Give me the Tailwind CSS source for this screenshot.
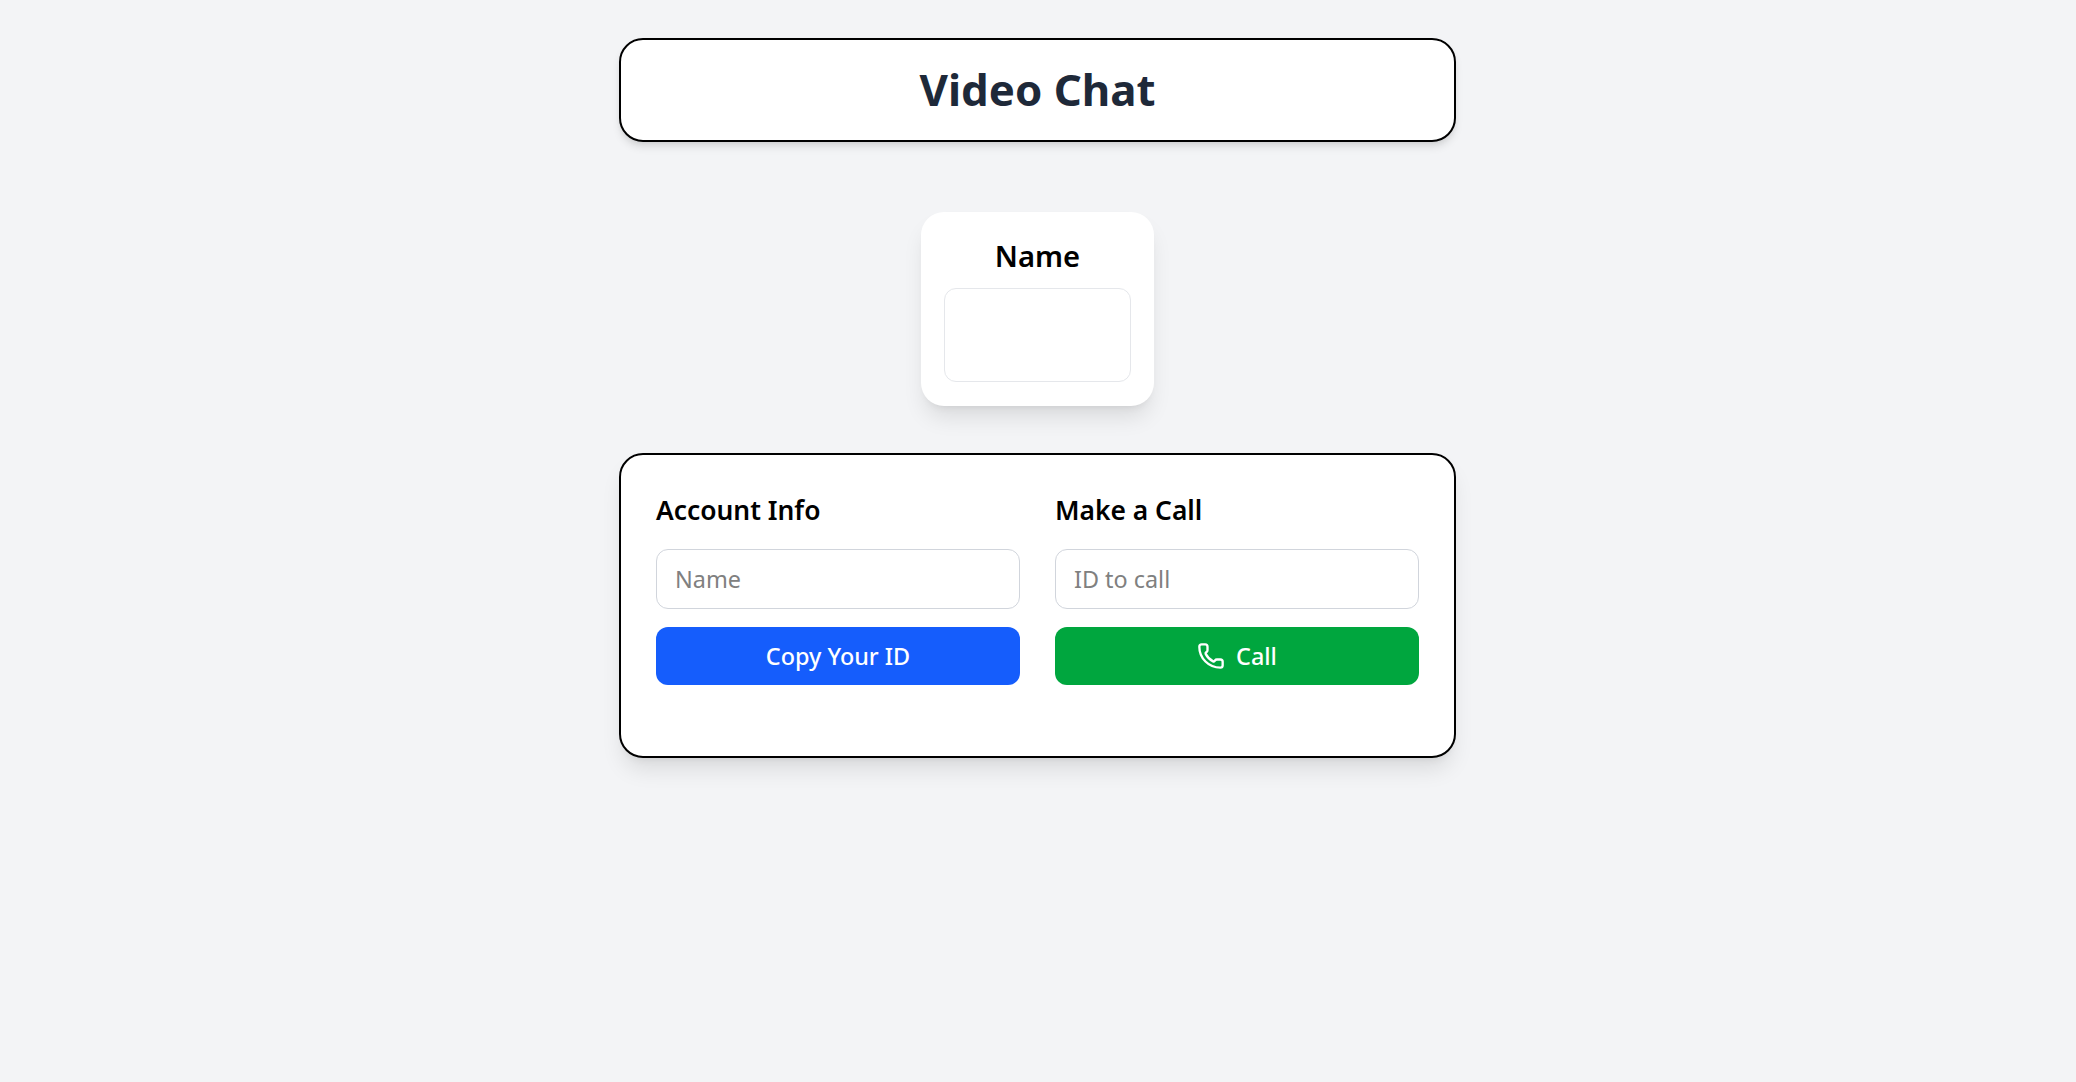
<!DOCTYPE html>
<html lang="en">
<head>
<meta charset="utf-8">
<title>Video Chat</title>
<script src="https://cdn.jsdelivr.net/npm/@tailwindcss/browser@4"></script>
</head>
<body class="min-h-screen bg-gray-100 font-['Noto_Sans',sans-serif] text-black">
<div class="flex flex-col items-center pt-[38px] pr-px">
  <header class="flex h-[104px] w-[837px] items-center justify-center rounded-[24px] border-2 border-black bg-white pb-[2px] shadow-[0_6px_9px_-1.5px_rgba(0,0,0,0.1),0_3px_6px_-3px_rgba(0,0,0,0.1)]">
    <h1 class="text-[43.8px] leading-[52px] font-bold text-gray-800">Video Chat</h1>
  </header>
  <section class="mt-[70px] flex h-[194px] w-[233px] flex-col items-center rounded-[23px] bg-white pt-[23px] shadow-[0_14.5px_22px_-4.4px_rgba(0,0,0,0.1),0_6px_9px_-6px_rgba(0,0,0,0.1)]">
    <h2 class="text-[29.2px] leading-[42px] font-semibold">Name</h2>
    <div class="mt-[11px] h-[94px] w-[187px] rounded-[12px] border border-gray-200"></div>
  </section>
  <main class="mt-[47px] grid h-[305px] w-[837px] grid-cols-2 content-start gap-[35px] rounded-[24px] border-2 border-black bg-white px-[35px] pt-[35px] shadow-[0_14.5px_22px_-4.4px_rgba(0,0,0,0.1),0_6px_9px_-6px_rgba(0,0,0,0.1)]">
    <div class="flex flex-col">
      <h3 class="text-[26.4px] leading-[40px] font-semibold">Account Info</h3>
      <input type="text" placeholder="Name" class="mt-[19px] h-[60px] w-full rounded-[12px] border border-gray-300 px-[18px] pb-px text-[23.4px] placeholder:text-[#808080]">
      <button class="mt-[18px] h-[58px] w-full rounded-[12px] bg-blue-600 pt-[2px] text-[23.4px] font-medium text-white">Copy Your ID</button>
    </div>
    <div class="flex flex-col">
      <h3 class="text-[26.4px] leading-[40px] font-semibold">Make a Call</h3>
      <input type="text" placeholder="ID to call" class="mt-[19px] h-[60px] w-full rounded-[12px] border border-gray-300 px-[18px] pb-px text-[23.4px] placeholder:text-[#808080]">
      <button class="mt-[18px] flex h-[58px] w-full items-center justify-center gap-[11px] rounded-[12px] bg-green-600 text-[23.4px] font-medium text-white">
        <svg class="size-[28px]" viewBox="0 0 24 24" fill="none" stroke="currentColor" stroke-width="2" stroke-linecap="round" stroke-linejoin="round"><path d="M13.832 16.568a1 1 0 0 0 1.213-.303l.355-.465A2 2 0 0 1 17 15h3a2 2 0 0 1 2 2v3a2 2 0 0 1-2 2A18 18 0 0 1 2 4a2 2 0 0 1 2-2h3a2 2 0 0 1 2 2v3a2 2 0 0 1-.8 1.6l-.468.351a1 1 0 0 0-.292 1.233 14 14 0 0 0 6.392 6.384"/></svg>
        <span class="pt-[2px]">Call</span>
      </button>
    </div>
  </main>
</div>
</body>
</html>
